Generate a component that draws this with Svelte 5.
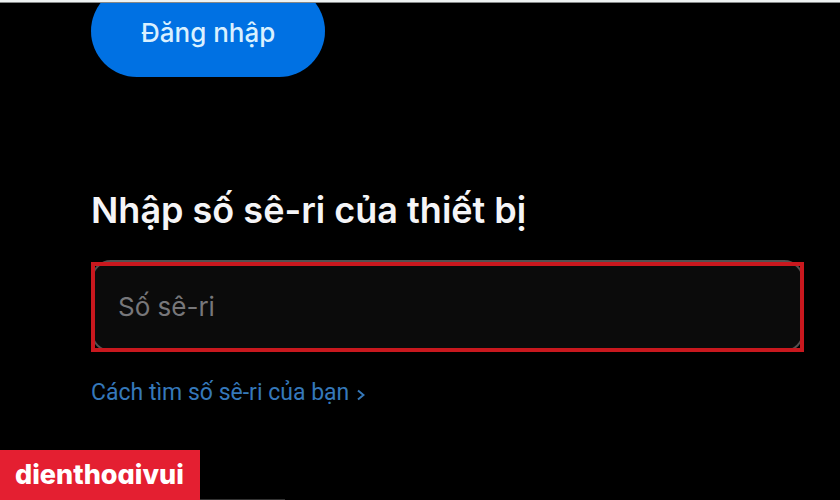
<script lang="ts">
  let serial = $state('');
</script>

<div class="page">
  <section class="sign-in">
    <button type="button" class="sign-in-button">Đăng nhập</button>
  </section>

  <main>
    <label class="title" for="serial">Nhập số sê-ri của thiết bị</label>
    <div class="highlight">
      <input id="serial" type="text" placeholder="Số sê-ri" bind:value={serial} />
    </div>
    <a class="help" href="#help">
      Cách tìm số sê-ri của bạn
      <svg viewBox="0 0 8 12" width="8" height="12" aria-hidden="true">
        <path d="M1 1.5 L6.5 6 L1 10.5" />
      </svg>
    </a>
  </main>

  <div class="brand">dienthoaivui</div>
  <div class="next-edge"></div>
</div>

<style>
  :global(body) {
    margin: 0;
    background: #000;
  }

  .page {
    position: relative;
    box-sizing: border-box;
    min-height: 100vh;
    border-top: 2px solid #eef2f2;
    background: #000;
    color: #f5f5f7;
    font-family: Inter, Roboto, sans-serif;
  }

  .sign-in {
    padding: 0 91px;
    border-top: 1px solid #858888;
    overflow: hidden;
  }

  /* The pill is scrolled partly under the top edge */
  .sign-in-button {
    display: block;
    height: 92px;
    margin-top: -18px;
    padding: 2px 50px 0;
    border: 0;
    border-radius: 46px;
    background: #0071e3;
    color: #d9f0ff;
    font-family: inherit;
    font-size: 26px;
    font-weight: 500;
    cursor: pointer;
  }

  main {
    padding: 109px 36px 0 91px;
  }

  .title {
    display: block;
    font-size: 36px;
    font-weight: 600;
    line-height: 48px;
  }

  .highlight {
    position: relative;
    margin-top: 26px;
  }

  .highlight::after {
    content: '';
    position: absolute;
    inset: 2px 0 0;
    border: 4px solid #c9181e;
    pointer-events: none;
  }

  input {
    display: block;
    box-sizing: border-box;
    width: 100%;
    height: 92px;
    padding: 0 25px;
    border: 2px solid #555050;
    border-radius: 20px;
    background: #0b0b0b;
    color: #f5f5f7;
    font-family: inherit;
    font-size: 26px;
    outline: none;
  }

  input::placeholder {
    color: #77777a;
    opacity: 1;
  }

  .help {
    display: inline-flex;
    align-items: center;
    gap: 8px;
    margin-top: 27px;
    color: #3578ba;
    font-family: Roboto, sans-serif;
    font-size: 23px;
    line-height: 28px;
    text-decoration: none;
  }

  .help svg {
    margin-top: 4px;
    fill: none;
    stroke: currentColor;
    stroke-width: 2;
  }

  .brand {
    position: absolute;
    left: 0;
    bottom: 0;
    box-sizing: border-box;
    width: 200px;
    padding: 0 15px;
    background: #e41f31;
    color: #fff;
    font-size: 27px;
    font-weight: 800;
    font-feature-settings: 'cv11';
    line-height: 50px;
  }

  .next-edge {
    position: absolute;
    left: 200px;
    bottom: 0;
    width: 85px;
    height: 1px;
    background: #333;
  }
</style>
